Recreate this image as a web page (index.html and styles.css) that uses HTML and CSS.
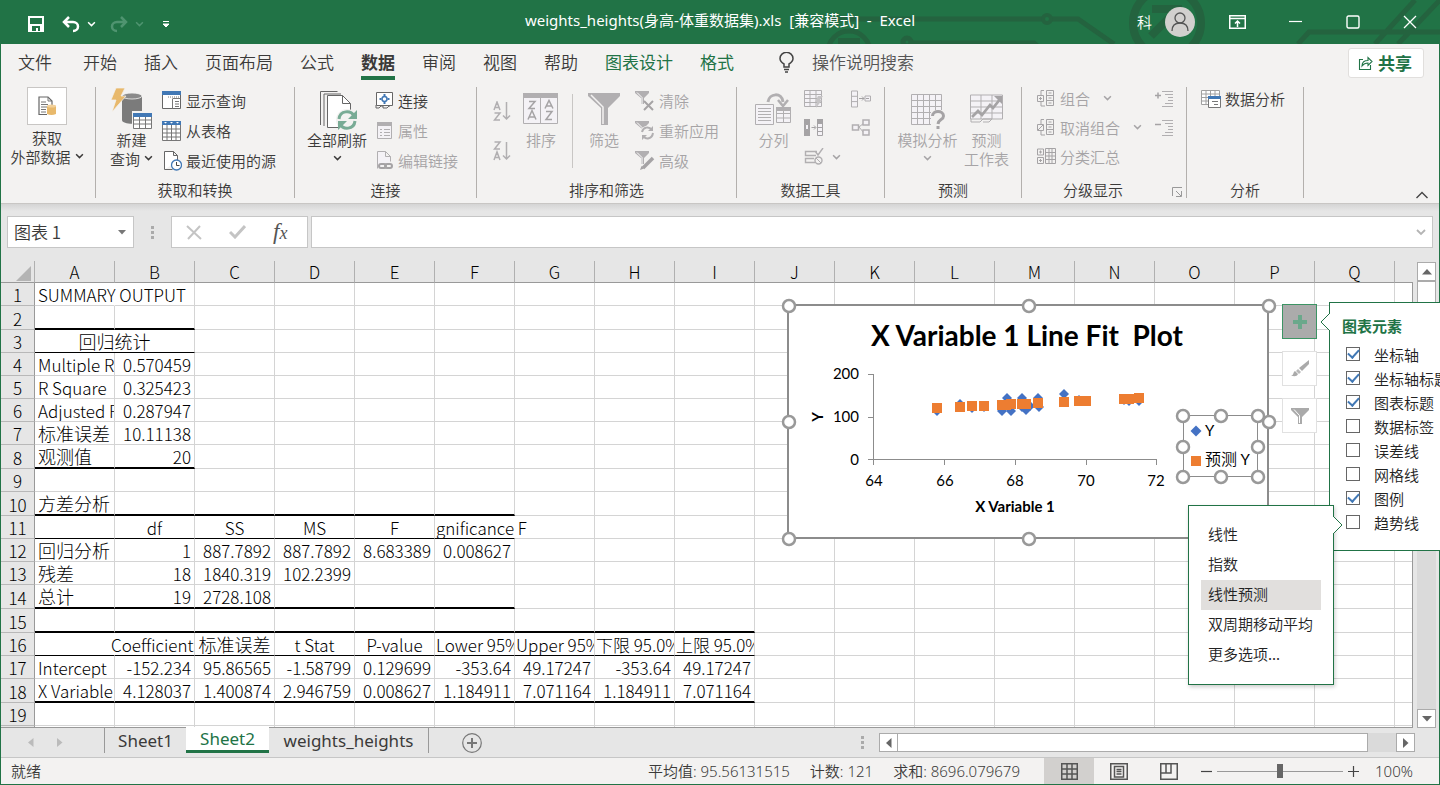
FILE: index.html
```html
<!DOCTYPE html>
<html lang="zh-CN">
<head>
<meta charset="utf-8">
<title>weights_heights(身高-体重数据集).xls - Excel</title>
<link rel="stylesheet" href="styles.css">
</head>
<body>
<svg class="defs" width="0" height="0" aria-hidden="true">
  <symbol id="chev" viewBox="0 0 8 6"><path d="M1 1l3 3 3-3" fill="none" stroke="currentColor" stroke-width="1.300"/></symbol>
  <symbol id="funnel" viewBox="0 0 32 32"><path d="M0 0h32v3L20 15v17h-7V15L0 3z" fill="#b1afb1"/><path d="M3 2l12 12v17" fill="none" stroke="#f3f2f1" stroke-width="1.500"/></symbol>
</svg>

<header class="titlebar">
  <svg class="circuit" viewBox="820 0 620 44" width="620" height="44" aria-hidden="true">
    <g fill="none" stroke="#24633f" stroke-width="5">
      <circle cx="849" cy="52" r="21"/><path d="M838 41h22" stroke-width="6"/>
      <circle cx="907" cy="42" r="4"/><path d="M912 43h122l7 6"/>
      <path d="M828 19h214M1052 19h26l36 25"/><circle cx="1047" cy="19" r="4" stroke-width="4"/>
      <circle cx="1167" cy="23" r="34" stroke-width="8"/><path d="M1151 36l26-26M1152 9h26v24" stroke-width="8"/>
      <path d="M1298 44l11-12h131M1375 44l40-44M1398 44l42-44"/>
    </g>
  </svg>
  <div class="quick">
    <button class="tbtn save" aria-label="保存"><svg width="16" height="16" viewBox="0 0 16 16"><path d="M1 1h14v14H1z" fill="none" stroke="#fff" stroke-width="2"/><path d="M2 8h12v7H2z" fill="#fff"/><path d="M4 10h8v5h-2v-3H8v3H4z" fill="#217346"/></svg></button>
    <button class="tbtn undo" aria-label="撤消"><svg width="18" height="17" viewBox="0 0 18 17"><path d="M2 6h9c3 0 5 2 5 4.500S14 15 11 15M7 1L2 6l5 5" fill="none" stroke="#fff" stroke-width="2.500"/></svg></button>
    <button class="tbtn uchev" aria-label="撤消列表"><svg width="9" height="7"><use href="#chev"/></svg></button>
    <button class="tbtn redo" aria-label="恢复"><svg width="18" height="17" viewBox="0 0 18 17"><path d="M16 6H7C4 6 2 8 2 10.500S4 15 7 15M11 1l5 5-5 5" fill="none" stroke="#4f9470" stroke-width="2.500"/></svg></button>
    <button class="tbtn rchev" aria-label="恢复列表"><svg width="9" height="7"><use href="#chev"/></svg></button>
    <button class="tbtn" aria-label="自定义快速访问工具栏"><svg width="6" height="6" viewBox="0 0 6 6"><path d="M0 .5h6M0 3h6L3 6z" fill="#fff" stroke="#fff" stroke-width="1"/></svg></button>
  </div>
  <h1 class="doc">weights_heights(身高-体重数据集).xls&nbsp; [兼容模式]&nbsp; -&nbsp; Excel</h1>
  <div class="winctl">
    <span class="user">科</span>
    <svg class="avatar" width="30" height="30" viewBox="0 0 30 30"><circle cx="15" cy="15" r="15" fill="#d2d0ce"/><circle cx="15" cy="11" r="5" fill="none" stroke="#555" stroke-width="1.300"/><path d="M7 24c0-5 3-8 8-8s8 3 8 8" fill="none" stroke="#555" stroke-width="1.300"/></svg>
    <button class="tbtn" aria-label="功能区显示选项"><svg width="17" height="14" viewBox="0 0 17 14"><path d="M.75.75h15.500v12.500H.75zM1 3.500h15M8.500 12V6M6 8.500L8.500 6 11 8.500" fill="none" stroke="#fff" stroke-width="1.500"/></svg></button>
    <button class="tbtn" aria-label="最小化"><svg width="14" height="14" viewBox="0 0 14 14"><path d="M0 6.500h13" stroke="#fff" stroke-width="1.200"/></svg></button>
    <button class="tbtn" aria-label="最大化"><svg width="14" height="14" viewBox="0 0 14 14"><rect x="1" y="1" width="12" height="12" rx="1.500" fill="none" stroke="#fff" stroke-width="1.400"/></svg></button>
    <button class="tbtn" aria-label="关闭"><svg width="14" height="14" viewBox="0 0 14 14"><path d="M1 1l12 12M13 1L1 13" stroke="#fff" stroke-width="1.300"/></svg></button>
  </div>
</header>

<nav class="tabs">
  <button class="tab file">文件</button>
  <button class="tab">开始</button>
  <button class="tab">插入</button>
  <button class="tab">页面布局</button>
  <button class="tab">公式</button>
  <button class="tab active">数据</button>
  <button class="tab">审阅</button>
  <button class="tab">视图</button>
  <button class="tab">帮助</button>
  <button class="tab ctx">图表设计</button>
  <button class="tab ctx">格式</button>
  <button class="tab tell"><svg width="15" height="21" viewBox="0 0 15 21"><path d="M5 15v-3C2.500 10.500 1 9 1 6.500a6.500 6.200 0 0 1 13 0C14 9 12.500 10.500 10 12v3zM5 17.500h5M6 20h3" fill="none" stroke="#444" stroke-width="1.500"/></svg>操作说明搜索</button>
  <button class="share"><svg width="15" height="15" viewBox="0 0 15 15"><path d="M5 3.500H1.500v10h11V9M4 10c0-4 2.500-5.500 6-5.500V1.500l4 4-4 4V7C7 7 5.500 8 4 10z" fill="none" stroke="#217346" stroke-width="1.100"/></svg>共享</button>
</nav>

<section class="ribbon">
  <div class="group g1">
    <div class="gbody">
      <button class="big">
        <span class="box"><svg width="18" height="20" viewBox="0 0 18 20"><path d="M9 18.500H1V1h9l4 4v4" fill="#fff" stroke="#666" stroke-width="1.200"/><path d="M10 1v4h4M3 6h5M3 8.500h7M3 11h6M3 13.500h5M3 16h5" fill="none" stroke="#777"/><path d="M9 10h9v8q-4.500 2-9 0z" fill="#e8b96c"/><ellipse cx="13.500" cy="10" rx="4.500" ry="1.500" fill="#f3d19a"/></svg></span>
        <span class="cap">获取</span><span class="cap">外部数据 <svg class="cv" width="9" height="7"><use href="#chev"/></svg></span>
      </button>
    </div>
  </div>
  <div class="group g2">
    <div class="gbody">
      <button class="big">
        <svg width="42" height="42" viewBox="0 0 42 42"><path d="M11 8v24c0 5 20 5 20 0V8z" fill="#7b7b7b"/><ellipse cx="21" cy="8" rx="10" ry="3" fill="#8a8a8a" stroke="#f3f2f1" stroke-width=".8"/><path d="M5 0h9l-4 8h5L1 24l4-12H0z" fill="#e8b96c" stroke="#f3f2f1" stroke-width=".7"/><path d="M21 23h21v19H21z" fill="#f3f2f1"/><path d="M22.500 25.500h18v15h-18zM22.500 32h18M22.500 36h18M28.500 28v13M34.500 28v13" fill="#fff" stroke="#777"/><path d="M22 25h19v4H22z" fill="#4178b5"/></svg>
        <span class="cap">新建</span><span class="cap">查询 <svg class="cv" width="9" height="7"><use href="#chev"/></svg></span>
      </button>
      <div class="col">
        <button class="small"><svg width="20" height="19" viewBox="0 0 20 19"><path d="M.5.5h18v17H.5z" fill="#fff" stroke="#666"/><path d="M0 0h19v4H0z" fill="#4178b5"/><path d="M10.500 8v9.500M10.500 7.500h8M13 10.500h4M13 13h4M13 15.500h4" stroke="#777" fill="none"/><path d="M6 6h11" stroke="#777" stroke-dasharray="1 1"/></svg>显示查询</button>
        <button class="small"><svg width="20" height="20" viewBox="0 0 20 20"><path d="M.5.5h18v19H.5zM.5 8h18M.5 12h18M.5 16h18M5 4v16M9.500 4v16M14 4v16" fill="#fff" stroke="#777"/><path d="M0 0h19v4H0z" fill="#4178b5"/><path d="M2 1h3L3.500 2.500zM8 1h3L9.500 2.500zM14 1h3l-1.500 1.500z" fill="#fff"/></svg>从表格</button>
        <button class="small"><svg width="20" height="20" viewBox="0 0 20 20"><path d="M2.500 18.500V.5h9l4 4V10M11.500.5v4h4M2.500 18.500h8" fill="#fff" stroke="#666"/><circle cx="14.500" cy="14" r="5" fill="#fff" stroke="#4178b5" stroke-width="1.300"/><path d="M14.500 11v3.500h3" fill="none" stroke="#444"/></svg>最近使用的源</button>
      </div>
    </div>
    <h2 class="glabel">获取和转换</h2>
  </div>
  <div class="group g3">
    <div class="gbody">
      <button class="big">
        <svg width="38" height="40" viewBox="0 0 38 40"><path d="M.5 35V1.500h17M4 36V4h17" fill="none" stroke="#666"/><path d="M7.500 37.500v-32h15l8 8v24z" fill="#fff" stroke="#666"/><path d="M22.500 5.500v8h8" fill="none" stroke="#666"/><circle cx="27" cy="30" r="11" fill="#f3f2f1"/><path d="M19 29c1-9 12-9 15-3M35 31c-1 9-12 9-15 3" fill="none" stroke="#78ab95" stroke-width="3"/><path d="M37 20v9h-9zM18 40v-9h9z" fill="#78ab95"/></svg>
        <span class="cap">全部刷新</span><span class="cap"><svg class="cv" width="9" height="7"><use href="#chev"/></svg></span>
      </button>
      <div class="col">
        <button class="small"><svg width="19" height="18" viewBox="0 0 19 18"><path d="M1.500 13.500V.5h16v13z" fill="#fff" stroke="#666"/><path d="M1 13v3h3l2-2h2v2h4l2-2h1" fill="none" stroke="#666"/><circle cx="9.500" cy="7" r="2.500" fill="none" stroke="#4178b5" stroke-width="1.500"/><path d="M9.500 2v2M9.500 10v2M4.500 7h2M12.500 7h2" stroke="#4178b5" stroke-width="2"/></svg>连接</button>
        <button class="small off"><svg width="19" height="18" viewBox="0 0 19 18"><path d="M2.500.5h14v16h-14z" fill="#f4f2f6" stroke="#b1afb1"/><path d="M2 0h15v4H2z" fill="#b1afb1"/><path d="M9 7.500h6M9 10.500h6M9 13.500h6M5 7.500h2M5 10.500h2M5 13.500h2" stroke="#b1afb1"/></svg>属性</button>
        <button class="small off"><svg width="19" height="19" viewBox="0 0 19 19"><path d="M2.500 17.500V.5h8l5 5v5M10.500.5v5h5" fill="#f4f2f6" stroke="#b1afb1"/><rect x="4" y="13" width="7" height="4" rx="2" fill="none" stroke="#a5a3a5" stroke-width="2"/><rect x="10" y="13" width="7" height="4" rx="2" fill="none" stroke="#a5a3a5" stroke-width="2"/></svg>编辑链接</button>
      </div>
    </div>
    <h2 class="glabel">连接</h2>
  </div>
  <div class="group g4">
    <div class="gbody">
      <div class="azcol">
        <button class="ico" aria-label="升序"><svg width="18" height="20" viewBox="0 0 18 20"><path d="M1 9l3-8 3 8M2 6.500h4M1.500 12h5.500l-5.500 7H7M13.500 1v17M10 14.500l3.500 3.500 3.500-3.500" fill="none" stroke="#b1afb1" stroke-width="1.500"/></svg></button>
        <button class="ico" aria-label="降序"><svg width="18" height="20" viewBox="0 0 18 20"><path d="M1.500 1H7L1.500 8H7M1 19l3-8 3 8M2 16.500h4M13.500 1v17M10 14.500l3.500 3.500 3.500-3.500" fill="none" stroke="#b1afb1" stroke-width="1.500"/></svg></button>
      </div>
      <button class="big off sort"><svg width="36" height="32" viewBox="0 0 36 32"><path d="M.5.5h34v30H.5zM17.500 4v27" fill="#f4f2f6" stroke="#b1afb1"/><path d="M0 0h35v5H0z" fill="#b1afb1"/><path d="M6 8.500h6l-6 7h6M5 26.500l4-9 4 9M6.500 24h5M22 15.500l4-8 4 8M23.500 13h5M23 18.500h6l-6 8h6" fill="none" stroke="#a5a3a5" stroke-width="1.500"/></svg><span class="cap">排序</span></button>
      <i class="vline"></i>
      <button class="big off filt"><svg width="32" height="32"><use href="#funnel"/></svg><span class="cap">筛选</span></button>
      <div class="col">
        <button class="small off"><svg width="20" height="20" viewBox="0 0 20 20"><path d="M0 0h14v2L9 7v6H6V7L0 2z" fill="#b1afb1"/><path d="M2 1.500l5 5V13" fill="none" stroke="#fff"/><path d="M9 10l9 9M18 10l-9 9" stroke="#a5a3a5" stroke-width="2"/></svg>清除</button>
        <button class="small off"><svg width="20" height="20" viewBox="0 0 20 20"><path d="M0 0h14v2L9 7v6H6V7L0 2z" fill="#b1afb1"/><path d="M2 1.500l5 5V13" fill="none" stroke="#fff"/><circle cx="12" cy="12" r="7" fill="#f3f2f1"/><path d="M7 11c1-5 7-6 10-2M18 12c-1 6-7 7-10 3" fill="none" stroke="#b1afb1" stroke-width="2"/><path d="M18 5v5h-5zM7 19v-5h5z" fill="#b1afb1"/></svg>重新应用</button>
        <button class="small off"><svg width="20" height="20" viewBox="0 0 20 20"><path d="M0 0h14v2L9 7v6H6V7L0 2z" fill="#b1afb1"/><path d="M2 1.500l5 5V13" fill="none" stroke="#fff"/><path d="M8 17L18 7" stroke="#a5a3a5" stroke-width="3.500"/><path d="M5 19l1.500-4L9 17.500z" fill="#a5a3a5"/></svg>高级</button>
      </div>
    </div>
    <h2 class="glabel">排序和筛选</h2>
  </div>
  <div class="group g5">
    <div class="gbody">
      <button class="big off"><svg width="37" height="32" viewBox="0 0 37 32"><path d="M.5 11.500h18v20H.5z" fill="#f4f2f6" stroke="#b1afb1"/><path d="M3 15.500h13M3 18.500h13M3 21.500h13M3 24.500h13M3 27.500h13" stroke="#b1afb1"/><path d="M21.500 15.500h14v14h-14zM21.500 20.500h14M21.500 25h14M28.500 18v12" fill="#f4f2f6" stroke="#b1afb1"/><path d="M21 14h15v4H21z" fill="#b1afb1"/><path d="M13 9c1-9 14-10 15 0" fill="none" stroke="#b1afb1" stroke-width="3"/><path d="M23 7l5 6 5-6" fill="none" stroke="#b1afb1" stroke-width="2.500"/></svg><span class="cap">分列</span></button>
      <div class="tools">
        <button class="ico" aria-label="快速填充"><svg width="20" height="18" viewBox="0 0 20 18"><path d="M.5.5h17v16H.5zM.5 4.500h17M.5 8.500h17M.5 12.500h17M6 .5v16M12 .5v16" fill="#f4f2f6" stroke="#b1afb1"/><path d="M14 6h5l-3 4h2l-6 8 1-6h-2z" fill="#c6c4c6"/></svg></button>
        <button class="ico" aria-label="合并计算"><svg width="20" height="18" viewBox="0 0 20 18"><path d="M.5 1h6v16h-6zM.5 6.300h6M.5 11.600h6M14 6h5.500v5H14z" fill="#f4f2f6" stroke="#b1afb1"/><path d="M8 8.500h5M11 6.500l2 2-2 2M15 8.500h3" fill="none" stroke="#a5a3a5"/></svg></button>
        <button class="ico" aria-label="删除重复值"><svg width="20" height="18" viewBox="0 0 20 18"><path d="M0 0h6v17H0z" fill="#a5a3a5"/><path d="M1.500 5.500h3v5h-3zM13.500.5h5v16h-5zM13.500 8.500h5M13.500 12.500h5" fill="#f4f2f6" stroke="#a5a3a5"/><path d="M13 0h6v5h-6z" fill="#a5a3a5"/><path d="M7.500 8.500h4M10 6.500l2 2-2 2" fill="none" stroke="#a5a3a5"/></svg></button>
        <button class="ico" aria-label="关系"><svg width="20" height="18" viewBox="0 0 20 18"><path d="M8 8l5-4M8 8l5 6" stroke="#b1afb1"/><path d="M1.500 6h6v5h-6zM12 1h6v5h-6zM12 11h6v5h-6z" fill="#f4f2f6" stroke="#b1afb1" stroke-width="1.500"/></svg></button>
        <button class="ico" aria-label="数据验证"><svg width="20" height="18" viewBox="0 0 20 18"><path d="M13 3.500H1.500v4H12M10 10.500H1.500v4H11M11 3l3 4 5-7" fill="none" stroke="#b1afb1" stroke-width="1.400"/><circle cx="14.500" cy="12.500" r="3.500" fill="none" stroke="#b1afb1" stroke-width="1.400"/><path d="M12 10l5 5" stroke="#b1afb1"/></svg><svg class="cv" width="9" height="7"><use href="#chev"/></svg></button>
      </div>
    </div>
    <h2 class="glabel">数据工具</h2>
  </div>
  <div class="group g6">
    <div class="gbody">
      <button class="big off"><svg width="34" height="36" viewBox="0 0 34 36"><path d="M.5.5h30v30H.5zM.5 6.500h30M.5 12.500h30M.5 18.500h30M.5 24.500h30M6.500.5v30M12.500.5v30M18.500.5v30M24.500.5v30" fill="#f4f2f6" stroke="#b1afb1"/><path d="M20 16h14v20H20z" fill="#f3f2f1"/><path d="M21.500 22c0-6 11-6 11 0 0 4-5 3-5.500 8" fill="none" stroke="#a5a3a5" stroke-width="3"/><path d="M25.500 32h3v3h-3z" fill="#a5a3a5"/></svg><span class="cap">模拟分析</span><span class="cap"><svg class="cv" width="9" height="7"><use href="#chev"/></svg></span></button>
      <button class="big off"><svg width="34" height="36" viewBox="0 0 34 36"><path d="M.5 1h32v24H.5zM.5 7h32M.5 13h32M.5 19h32M11 1v24M22 1v24" fill="#f4f2f6" stroke="#b1afb1"/><path d="M1 25v3h9l3-3h9l-3 3h-6" fill="none" stroke="#b1afb1"/><path d="M2 23l6-6 4 4 8-10 3 3L31 4" fill="none" stroke="#a5a3a5" stroke-width="2.800"/><path d="M24 2h8v8z" fill="#a5a3a5"/></svg><span class="cap">预测</span><span class="cap">工作表</span></button>
    </div>
    <h2 class="glabel">预测</h2>
  </div>
  <div class="group g7">
    <div class="gbody">
      <div class="col tight">
        <button class="small off"><svg width="19" height="17" viewBox="0 0 19 17"><path d="M4 5V.5h3M4 12v4h4M.5 5.500h6v6h-6zM9.500.5h7v15h-7zM9.500 5.500h7M9.500 10.500h7M2 8.500h3M3.500 7v3M11.500 3h3M11.500 8h3M11.500 13h3" fill="none" stroke="#a5a3a5"/></svg>组合<svg class="cv c1" width="9" height="7"><use href="#chev"/></svg></button>
        <button class="small off"><svg width="19" height="17" viewBox="0 0 19 17"><path d="M4 5V.5h3M4 12v4h4M.5 5.500h6v6h-6zM9.500.5h7v15h-7zM9.500 5.500h7M9.500 10.500h7M1 11l5-5M11.500 3h3M11.500 8h3M11.500 13h3" fill="none" stroke="#a5a3a5"/></svg>取消组合<svg class="cv c1" width="9" height="7"><use href="#chev"/></svg></button>
        <button class="small off"><svg width="19" height="17" viewBox="0 0 19 17"><path d="M.5 1h6v6h-6zM.5 9.500h6v6h-6zM8.500.5h10v15h-10zM8.500 4.500h10M8.500 8h10M8.500 11.500h10M12 .5v15M15 .5v15M2 4h3M3.500 2.500v3M2 12.500h3M3.500 11v3" fill="none" stroke="#a5a3a5"/></svg>分类汇总</button>
      </div>
      <div class="col tight">
        <button class="ico" aria-label="显示明细数据"><svg width="18" height="16" viewBox="0 0 18 16"><path d="M0 4.500h6M3 1.500v6" stroke="#a5a3a5" stroke-width="1.500"/><path d="M7 .5h11M10 3.500h8M13 6.500h5M13 9.500h5M10 12.500h8M7 15.500h11" stroke="#b1afb1"/></svg></button>
        <button class="ico" aria-label="隐藏明细数据"><svg width="18" height="16" viewBox="0 0 18 16"><path d="M0 4.500h6" stroke="#a5a3a5" stroke-width="1.500"/><path d="M7 .5h11M10 3.500h8M13 6.500h5M13 9.500h5M10 12.500h8M7 15.500h11" stroke="#b1afb1"/></svg></button>
      </div>
    </div>
    <h2 class="glabel">分级显示</h2>
    <button class="launch" aria-label="分级显示设置"><svg width="11" height="11" viewBox="0 0 11 11"><path d="M.5 9V.5H10M4 4l5 5M9.500 4v5.500H4" fill="none" stroke="#999"/></svg></button>
  </div>
  <div class="group g8">
    <div class="gbody">
      <div class="col tight"><button class="small"><svg width="20" height="18" viewBox="0 0 20 18"><path d="M.5.500h18v14H.5zM.5 4h18M.5 7.500h18M.5 11h18M5 .5v14M9.500 .5v14M14 .5v14" fill="#fff" stroke="#a0a0a0"/><path d="M7.500 6.500h12v11h-12z" fill="#fff" stroke="#777"/><path d="M7 6h13v3H7z" fill="#4178b5"/><path d="M11 11.500h6M13 14.500h4" stroke="#777"/></svg>数据分析</button></div>
    </div>
    <h2 class="glabel">分析</h2>
  </div>
  <button class="collapse" aria-label="折叠功能区"><svg width="14" height="8" viewBox="0 0 14 8"><path d="M1.500 7L7 1.500 12.500 7" fill="none" stroke="#444" stroke-width="1.400"/></svg></button>
</section>

<section class="fbar">
  <div class="namebox"><input type="text" value="图表 1" aria-label="名称框"><svg width="8" height="5" viewBox="0 0 8 5"><path d="M0 0h8L4 4.500z" fill="#777"/></svg></div>
  <i class="dots"></i>
  <div class="fbtns">
    <button aria-label="取消"><svg width="16" height="15" viewBox="0 0 16 15"><path d="M1 1l14 13M14 1L2 14" stroke="#c4c4c4" stroke-width="2"/></svg></button>
    <button aria-label="输入"><svg width="17" height="14" viewBox="0 0 17 14"><path d="M1 7l5 5L16 1" fill="none" stroke="#c4c4c4" stroke-width="3"/></svg></button>
    <button class="fx" aria-label="插入函数">f<small>x</small></button>
  </div>
  <div class="fin"><input type="text" aria-label="编辑栏"><svg width="10" height="7" viewBox="0 0 10 7"><path d="M1 1l4 4 4-4" fill="none" stroke="#b4b4b4" stroke-width="1.800"/></svg></div>
</section>

<main class="work">
  <div class="sheet">
    <table class="grid" id="grid"></table>
  </div>
  <div class="vscroll">
    <button aria-label="向上滚动"><svg width="10" height="6" viewBox="0 0 10 6"><path d="M0 5.500h10L5 0z" fill="#666"/></svg></button>
    <i class="vthumb"></i><i class="vtrack"></i>
    <button aria-label="向下滚动"><svg width="10" height="6" viewBox="0 0 10 6"><path d="M0 0h10L5 5.500z" fill="#666"/></svg></button>
  </div>

  <svg class="chart" viewBox="780 296 498 252" width="498" height="252" role="img" aria-label="X Variable 1 Line Fit Plot">
    <rect x="788" y="305" width="480" height="233" fill="#fff" stroke="#8c8c8c" stroke-width="2"/>
    <text class="ct" x="1027" y="346" text-anchor="middle">X Variable 1 Line Fit&#160; Plot</text>
    <g stroke="#8c8c8c" fill="none"><path d="M873.500 374v91M868 374.500h5M868 417.500h5M868 459.500h289M944.500 460v5M1015.500 460v5M1086.500 460v5M1156.500 460v5"/></g>
    <g class="ax" text-anchor="end"><text x="859" y="379">200</text><text x="859" y="422">100</text><text x="859" y="465">0</text></g>
    <g class="ax" text-anchor="middle"><text x="874" y="486">64</text><text x="945" y="486">66</text><text x="1015" y="486">68</text><text x="1086" y="486">70</text><text x="1156" y="486">72</text></g>
    <text class="at" x="1015" y="512" text-anchor="middle">X Variable 1</text>
    <text class="at" transform="translate(823 417) rotate(-90)" text-anchor="middle">Y</text>
    <g id="points"></g>
    <rect x="1183.500" y="415.500" width="74" height="61" fill="#fff" stroke="#8c8c8c"/>
    <path d="M1196 425.500l5.500 5.500-5.500 5.500-5.500-5.500z" fill="#4472c4"/><path d="M1191 456h10v10h-10z" fill="#ed7d31"/>
    <text class="ax" x="1205" y="436">Y</text><text class="lg" x="1205" y="465">预测 <tspan class="ax">Y</tspan></text>
    <g fill="#fff" stroke="#999" stroke-width="2.500">
      <circle cx="789" cy="306" r="6"/><circle cx="1029" cy="306" r="6"/><circle cx="1269" cy="306" r="6"/><circle cx="789" cy="422" r="6"/><circle cx="1269" cy="422" r="6"/><circle cx="789" cy="539" r="6"/><circle cx="1029" cy="539" r="6"/>
      <circle cx="1183" cy="416" r="6"/><circle cx="1221" cy="416" r="6"/><circle cx="1258" cy="416" r="6"/><circle cx="1183" cy="447" r="6"/><circle cx="1258" cy="447" r="6"/><circle cx="1183" cy="477" r="6"/><circle cx="1221" cy="477" r="6"/><circle cx="1258" cy="477" r="6"/>
    </g>
  </svg>

  <div class="cbtns">
    <button class="on" aria-label="图表元素"><svg width="14" height="14" viewBox="0 0 14 14"><path d="M7 0v14M0 7h14" stroke="#6aa88b" stroke-width="4"/></svg></button>
    <button aria-label="图表样式"><svg width="18" height="17" viewBox="0 0 18 17"><path d="M18 0v4l-7 7-3-3z" fill="#aaa"/><path d="M7 9l3 3-2 2-3-3z" fill="#b8b8b8"/><path d="M4 11l3 3c-1 3-4 2-7 2 3-1 2-4 4-5z" fill="#aaa"/></svg></button>
    <button aria-label="图表筛选器"><svg width="18" height="16" viewBox="0 0 18 16"><path d="M0 0h18v2l-7 7v7H7V9L0 2z" fill="#aaa"/><path d="M3 1.500l5.500 6V15" fill="none" stroke="#fff"/></svg></button>
  </div>

  <div class="panel">
    <svg class="notchL" width="10" height="20" viewBox="0 0 10 20"><path d="M10 0v1L1 10l9 9v1" fill="#fff" stroke="#217346"/></svg>
    <h3>图表元素</h3>
    <label><input type="checkbox" checked>坐标轴</label>
    <label><input type="checkbox" checked>坐标轴标题</label>
    <label><input type="checkbox" checked>图表标题</label>
    <label><input type="checkbox">数据标签</label>
    <label><input type="checkbox">误差线</label>
    <label><input type="checkbox">网格线</label>
    <label><input type="checkbox" checked>图例</label>
    <label><input type="checkbox">趋势线</label>
  </div>
  <div class="submenu">
    <svg class="notchR" width="10" height="20" viewBox="0 0 10 20"><path d="M0 0v1l9 9-9 9v1" fill="#fff" stroke="#217346"/></svg>
    <button>线性</button>
    <button>指数</button>
    <button class="hot">线性预测</button>
    <button>双周期移动平均</button>
    <button>更多选项...</button>
  </div>
</main>

<footer class="sheets">
  <button class="nav" aria-label="上一个"><svg width="6" height="9" viewBox="0 0 6 9"><path d="M5.500 0v9L0 4.500z" fill="#bbb"/></svg></button>
  <button class="nav n2" aria-label="下一个"><svg width="6" height="9" viewBox="0 0 6 9"><path d="M0 0v9l5.500-4.500z" fill="#bbb"/></svg></button>
  <button class="st first">Sheet1</button>
  <button class="st cur">Sheet2</button>
  <button class="st last">weights_heights</button>
  <button class="add" aria-label="新工作表"><svg width="20" height="20" viewBox="0 0 20 20"><circle cx="10" cy="10" r="9.300" fill="none" stroke="#777" stroke-width="1.200"/><path d="M10 5v10M5 10h10" stroke="#777" stroke-width="2"/></svg></button>
  <i class="dots"></i>
  <div class="hscroll">
    <button aria-label="向左滚动"><svg width="6" height="10" viewBox="0 0 6 10"><path d="M5.500 0v10L0 5z" fill="#666"/></svg></button>
    <i class="hthumb"></i><i class="htrack"></i>
    <button aria-label="向右滚动"><svg width="6" height="10" viewBox="0 0 6 10"><path d="M0 0v10l5.500-5z" fill="#666"/></svg></button>
  </div>
</footer>
<footer class="status">
  <span class="ready">就绪</span>
  <span class="stat">平均值: 95.56131515</span>
  <span class="stat">计数: 121</span>
  <span class="stat">求和: 8696.079679</span>
  <div class="views">
    <button class="on" aria-label="普通"><svg width="17" height="17" viewBox="0 0 17 17"><path d="M.75.75h15.500v15.500H.75zM6 1v15M11 1v15M1 6h15M1 11h15" fill="none" stroke="#555" stroke-width="1.500"/></svg></button>
    <button aria-label="页面布局"><svg width="18" height="17" viewBox="0 0 18 17"><path d="M.75.75h16.500v15.500H.75zM4.500 3.500h9v10.500h-9zM6.500 6.500h5M6.500 8.500h5M6.500 11h5" fill="none" stroke="#555" stroke-width="1.500"/></svg></button>
    <button aria-label="分页预览"><svg width="18" height="17" viewBox="0 0 18 17"><path d="M.75.75h16.500v15.500H.75zM1 10h10V1M6 1v9" fill="none" stroke="#555" stroke-width="1.500"/></svg></button>
  </div>
  <button class="zb" aria-label="缩小"><svg width="11" height="11" viewBox="0 0 11 11"><path d="M0 5.500h11" stroke="#444" stroke-width="1.200"/></svg></button>
  <input class="zoom" type="range" min="0" max="100" value="50" aria-label="缩放">
  <button class="zb" aria-label="放大"><svg width="11" height="11" viewBox="0 0 11 11"><path d="M0 5.500h11M5.500 0v11" stroke="#444" stroke-width="1.200"/></svg></button>
  <span class="pct">100%</span>
</footer>
<script src="sheet.js"></script>
</body>
</html>
```

FILE: styles.css
```css
* { box-sizing: border-box; }
body {
  margin: 0; height: 100vh; overflow: hidden; display: flex; flex-direction: column;
  background: #e6e6e6; color: #3b3a39;
  font: 350 15px/19px "Noto Sans CJK SC", sans-serif;
}
body::after { content: ""; position: absolute; inset: 44px 0 0 0; border: 1px solid #217346; border-top: 0; pointer-events: none; }
button { font: inherit; color: inherit; background: none; border: 0; padding: 0; margin: 0; }
svg { display: block; flex: none; }
h1, h2, h3 { margin: 0; font: inherit; }
input { font: inherit; color: inherit; }
.defs { position: absolute; }

.titlebar { position: relative; height: 44px; flex: none; display: grid; grid-template-columns: 1fr auto 1fr; align-items: center; background: #217346; color: #fff; }
.circuit { position: absolute; right: 0; top: 0; }
.quick, .doc, .winctl { position: relative; display: flex; align-items: center; }
.quick { padding-left: 28px; padding-top: 4px; }
.quick .undo { margin-left: 18px; }
.quick .uchev { margin-left: 7px; }
.quick .redo { margin-left: 14px; }
.quick .rchev { margin: 0 19px 0 7px; color: #4f9470; }
.doc { white-space: nowrap; height: 40px; align-self: start; font-family: "Noto Sans", "Noto Sans CJK SC", sans-serif; font-weight: 400; }
.winctl { justify-content: flex-end; padding-right: 23px; }
.user { margin-right: 13px; line-height: 15px; padding-bottom: 2px; }
.winctl .tbtn { margin-left: 43px; }
.winctl .avatar + .tbtn { margin-left: 34px; }

.tabs { height: 40px; flex: none; display: flex; align-items: flex-start; gap: 27px; padding: 0 16px 0 18px; background: #f3f2f1; font-size: 17px; line-height: 36px; }
.tab { height: 36px; white-space: nowrap; }
.file { margin-right: 4px; }
.tab.active { font-weight: bold; border-bottom: 4px solid #217346; line-height: 36px; }
.tab.ctx { color: #217346; font-weight: 400; }
.tell { display: flex; align-items: center; gap: 18px; margin-left: 18px; color: #555; }
.share { display: flex; align-items: center; gap: 5px; margin: 4px 0 0 auto; height: 30px; padding: 0 11px 0 9px; border: 1px solid #e1dfdd; border-radius: 3px; background: #fff; color: #217346; font-weight: bold; line-height: 26px; }

.ribbon { position: relative; height: 120px; flex: none; display: flex; padding: 3px 0 5px; background: #f3f2f1; border-bottom: 1px solid #c8c6c4; }
.group { position: relative; display: flex; flex-direction: column; border-right: 1px solid #b3b0ad; }
.gbody { display: flex; flex: 1; align-items: flex-start; }
.glabel { text-align: center; height: 17px; line-height: 18px; }
.off { color: #a6a4a6; }
.big { display: flex; flex-direction: column; align-items: center; flex: none; white-space: nowrap; }
.cap { display: flex; align-items: center; gap: 4px; height: 19px; }
.box { display: flex; align-items: center; justify-content: center; width: 40px; height: 38px; border: 1px solid #c8c6c4; background: #fff; }
.col { display: flex; flex-direction: column; gap: 11px; padding-top: 4px; }
.col.tight { gap: 10px; padding-top: 2px; }
.small { display: flex; align-items: center; gap: 4px; height: 19px; white-space: nowrap; }
.g1 { width: 96px; }
.g1 .big { width: 94px; }
.g1 .box { margin-bottom: 3px; }
.g2 { width: 199px; }
.g2 .big { width: 71px; padding-top: 1px; margin-right: -5px; }
.g3 { width: 182px; }
.g3 .big { width: 80px; padding-top: 3px; margin-left: 2px; margin-right: -2px; }
.g3 .big > svg { margin-left: 3px; }
.g4 { width: 260px; }
.azcol { display: flex; flex-direction: column; gap: 20px; padding: 14px 12px 0 16px; }
.g4 .big { padding-top: 6px; }
.g4 .big > svg, .g5 .big > svg { margin-bottom: 5px; }
.vline { width: 1px; height: 74px; margin: 7px 15px 0 13px; background: #c8c6c4; }
.g4 .col { padding-left: 15px; }
.g5 { width: 148px; }
.g5 .big { padding: 6px 12px 0 18px; }
.tools { display: grid; grid-template-columns: 47px 20px; gap: 11px 0; padding-top: 3px; }
.ico { display: flex; align-items: center; color: #a5a3a5; gap: 8px; }
.g6 { width: 137px; }
.g6 .big { width: 59px; padding-top: 7px; }
.g6 .big:first-child { margin-left: 13px; }
.g7 { width: 165px; }
.g7 .col:first-child { padding-left: 15px; width: 133px; }
.g7 .col:last-child { gap: 13px; padding-top: 4px; }
.c1 { margin-left: 9px; }
.g7 .glabel { padding-right: 22px; }
.launch { position: absolute; right: 3px; bottom: 0; }
.g8 { width: 117px; }
.g8 .col { padding-left: 14px; }
.collapse { position: absolute; right: 11px; bottom: 4px; }

.fbar { height: 57px; flex: none; display: flex; align-items: flex-start; padding: 12px 7px 0 7px; background: linear-gradient(#d4d4d4, #e6e6e6 7px); }
.namebox, .fbtns, .fin { display: flex; align-items: center; height: 32px; border: 1px solid #c6c6c6; background: #fff; }
.namebox { width: 127px; padding-right: 7px; }
.namebox input { flex: 1; min-width: 0; border: 0; padding: 0 6px 2px; background: none; font-size: 17px; }
.dots { width: 3px; height: 13px; margin: 10px 17px 0 17px; background: repeating-linear-gradient(#aaa 0 3px, transparent 3px 5px); }
.fbtns { width: 137px; justify-content: space-around; padding: 0 6px 0 0; margin-right: 3px; }
.fx { font: italic 23px/24px "Liberation Serif", serif; color: #555; }
.fx small { font-size: 18px; }
.fin { flex: 1; padding-right: 6px; }
.fin input { flex: 1; border: 0; min-width: 0; background: none; }

.work { position: relative; flex: 1; min-height: 0; display: flex; padding-left: 1px; }
.sheet { flex: 1; min-width: 0; overflow: hidden; border-bottom: 1px solid #999; position: relative; }
.sheet::after { content: ""; position: absolute; right: 0; top: 21px; bottom: 0; width: 1px; background: #999; }
.grid { width: 1474px; table-layout: fixed; border-collapse: separate; border-spacing: 0; color: #000; font-size: 17px; line-height: 21px; font-weight: 300; }
.grid th { padding: 1px 0 0; font-weight: 300; background: #e6e6e6; text-align: center; }
.grid thead th { height: 22px; padding: 0; border-right: 1px solid #b0b0b0; border-bottom: 1px solid #999; }
.corner { display: block; margin: 3px 3px 0 auto; }
.grid tbody th { border-right: 1px solid #999; border-bottom: 1px solid #b8b8b8; }
.grid td { padding: 1px 3px 0; background: #fff; border-right: 1px solid #d4d4d4; border-bottom: 1px solid #d4d4d4; white-space: nowrap; overflow: hidden; }
.grid tr.r23 { height: 23px; }
.grid tr.r24 { height: 24px; }
.grid td.n { text-align: right; }
.grid td.c { text-align: center; }
.grid td.zh { font-size: 18px; }
.grid td.free { overflow: visible; }
.grid td.tight { padding: 1px 0 0 1px; }
.grid td.thick { border-bottom: 2px solid #000; padding-top: 0; }
.grid td.thin { border-bottom: 1px solid #000; }
.grid td.plain { border-right-color: #fff; }
.grid td.back { overflow: visible; padding: 1px 0 0; }
.back span { display: block; margin-left: -4px; overflow: hidden; }
.vscroll { width: 27px; flex: none; display: flex; flex-direction: column; padding: 1px 4px 0; }
.vscroll button, .hscroll button { display: flex; align-items: center; justify-content: center; background: #fff; border: 1px solid #ababab; flex: none; }
.vscroll button { width: 19px; height: 19px; }
.vthumb { height: 220px; width: 19px; border: 1px solid #ababab; background: #fff; }
.vtrack { flex: 1; width: 19px; background: #dadada; }

.chart { position: absolute; left: 780px; top: 35px; }
.ct { font: bold 28px Lato, sans-serif; }
.ax { font: 15px Lato, sans-serif; }
.at { font: bold 15px Lato, sans-serif; }
.lg { font: 350 16px "Noto Sans CJK SC", sans-serif; }
.cbtns { position: absolute; left: 1282px; top: 43px; display: flex; flex-direction: column; gap: 12px; }
.cbtns button { display: flex; align-items: center; justify-content: center; width: 35px; height: 35px; background: #fff; border: 1px solid #e1e1e1; }
.cbtns .on { background: #ababab; border-color: #3c9464; }

.panel { position: absolute; left: 1329px; top: 41px; z-index: 2; width: 160px; height: 249px; padding: 11px 12px; background: #fff; border: 1px solid #217346; color: #222; white-space: nowrap; }
.panel h3 { color: #217346; font-weight: bold; height: 24px; line-height: 24px; margin-bottom: 4px; }
.panel label { display: flex; align-items: center; height: 24px; padding-left: 4px; gap: 14px; }
.panel input { appearance: none; width: 14px; height: 14px; margin: 0; border: 1px solid #666; background: #fff; display: grid; place-items: center; }
.panel input:checked::after { content: ""; width: 9px; height: 5px; margin-bottom: 3px; border: solid #4178b5; border-width: 0 0 2px 2px; transform: rotate(-48deg); }
.notchL { position: absolute; left: -10px; top: 9px; }
.submenu { position: absolute; left: 1188px; top: 244px; z-index: 3; width: 146px; height: 180px; padding: 14px 12px; background: #fff; border: 1px solid #217346; box-shadow: 1px 2px 4px rgba(0,0,0,.2); color: #222; }
.submenu button { display: block; width: 120px; height: 30px; padding: 0 0 4px 7px; text-align: left; white-space: nowrap; }
.submenu .hot { background: #e1dfdd; }
.notchR { position: absolute; right: -10px; top: 9px; }

.sheets { height: 29px; flex: none; display: flex; align-items: flex-start; font-size: 17px; padding: 0 25px 0 28px; font-family: "Noto Sans", sans-serif; font-weight: 400; }
.nav { margin-top: 10px; }
.n2 { margin-left: 23px; }
.st { height: 25px; line-height: 22px; white-space: nowrap; }
.first { width: 82px; margin-left: 41px; border-left: 1px solid #999; }
.cur { height: 26px; width: 83px; background: #fff; color: #217346; border-bottom: 3px solid #217346; margin-top: -1px; position: relative; }
.last { width: 160px; border-right: 1px solid #999; }
.add { margin: 5px 0 0 33px; }
.sheets .dots { margin: 8px 15px 0 auto; }
.hscroll { display: flex; width: 536px; height: 19px; margin-top: 5px; }
.hscroll button { width: 19px; height: 19px; }
.hthumb { flex: 1; border: 1px solid #ababab; border-left: 0; background: #fff; }
.htrack { width: 28px; background: #dadada; }

.status { height: 28px; flex: none; display: flex; align-items: center; background: #f3f2f1; border-top: 1px solid #c6c6c6; padding: 0 25px 1px 11px; font-family: "Noto Sans", "Noto Sans CJK SC", sans-serif; }
.ready { margin-right: auto; }
.stat { margin-right: 20px; }
.views { display: flex; align-self: stretch; margin-left: 4px; margin-right: 7px; }
.views button { width: 50px; display: flex; align-items: center; justify-content: center; }
.views .on { background: #d2d0ce; }
.zoom { appearance: none; width: 126px; height: 16px; margin: 0 5px; background: linear-gradient(#999, #999) center / 100% 1px no-repeat; }
.zoom::-webkit-slider-thumb { appearance: none; width: 6px; height: 14px; background: #666; }
.pct { width: 40px; margin-left: 16px; }
```

FILE: sheet.js
```js
// Cell contents by row: [column, text, classes]
const rows = {
  1: [["A", "SUMMARY OUTPUT", "free plain"]],
  3: [["A", "回归统计", "c zh span"]],
  4: [["A", "Multiple R"], ["B", "0.570459", "n"]],
  5: [["A", "R Square"], ["B", "0.325423", "n"]],
  6: [["A", "Adjusted R Square"], ["B", "0.287947", "n"]],
  7: [["A", "标准误差", "zh"], ["B", "10.11138", "n"]],
  8: [["A", "观测值", "zh"], ["B", "20", "n"]],
  10: [["A", "方差分析", "zh"]],
  11: [["B", "df", "c"], ["C", "SS", "c"], ["D", "MS", "c"], ["E", "F", "c"], ["F", "gnificance F", "free tight plain"]],
  12: [["A", "回归分析", "zh"], ["B", "1", "n"], ["C", "887.7892", "n"], ["D", "887.7892", "n"], ["E", "8.683389", "n"], ["F", "0.008627", "n"]],
  13: [["A", "残差", "zh"], ["B", "18", "n"], ["C", "1840.319", "n"], ["D", "102.2399", "n"]],
  14: [["A", "总计", "zh"], ["B", "19", "n"], ["C", "2728.108", "n"]],
  16: [["A", "", "plain"], ["B", "<span>Coefficients</span>", "back"], ["C", "标准误差", "c zh"], ["D", "t Stat", "c"], ["E", "P-value", "c"], ["F", "Lower 95%", "tight"], ["G", "Upper 95%", "tight"], ["H", "下限 95.0%", "tight"], ["I", "上限 95.0%", "tight"]],
  17: [["A", "Intercept"], ["B", "-152.234", "n"], ["C", "95.86565", "n"], ["D", "-1.58799", "n"], ["E", "0.129699", "n"], ["F", "-353.64", "n"], ["G", "49.17247", "n"], ["H", "-353.64", "n"], ["I", "49.17247", "n"]],
  18: [["A", "X Variable 1"], ["B", "4.128037", "n"], ["C", "1.400874", "n"], ["D", "2.946759", "n"], ["E", "0.008627", "n"], ["F", "1.184911", "n"], ["G", "7.071164", "n"], ["H", "1.184911", "n"], ["I", "7.071164", "n"]]
};
// Bottom rules: row -> [last column, class]
const rules = { 2: ["B", "thick"], 3: ["B", "thin"], 8: ["B", "thick"], 10: ["F", "thick"], 11: ["F", "thin"], 14: ["F", "thick"], 15: ["I", "thick"], 16: ["I", "thin"], 18: ["I", "thick"] };
const tall = [2, 8, 10, 14, 15, 18];
const cols = [..."ABCDEFGHIJKLMNOPQR"];

let html = '<colgroup><col style="width:34px">' + '<col style="width:80px">'.repeat(cols.length) + "</colgroup><thead><tr>" +
  '<th><svg class="corner" width="15" height="15" viewBox="0 0 15 15"><path d="M15 0v15H0z" fill="#b4b4b4"/></svg></th>' +
  cols.map(c => `<th>${c}</th>`).join("") + "</tr></thead><tbody>";
for (let r = 1; r <= 20; r++) {
  const cells = Object.fromEntries((rows[r] || []).map(c => [c[0], c]));
  html += `<tr class="${tall.includes(r) ? "r24" : "r23"}"><th>${r}</th>`;
  for (let i = 0; i < cols.length; i++) {
    const c = cols[i], cell = cells[c];
    let cls = cell && cell[2] || "";
    if (rules[r] && c <= rules[r][0]) cls += " " + rules[r][1];
    const span = cls.includes("span") ? ' colspan="2"' : "";
    html += `<td${span} class="${cls.trim()}">${cell ? cell[1] : ""}</td>`;
    if (span) i++;
  }
  html += "</tr>";
}
document.getElementById("grid").innerHTML = html + "</tbody>";

// Scatter markers: observed values, then the fitted line
const observed = [[937, 411], [960, 404], [972, 408], [984, 407], [1002, 411], [1007, 398], [1011, 411], [1022, 398], [1026, 410], [1022, 407], [1030, 406], [1038, 398], [1039, 407], [1064, 394], [1079, 400], [1086, 401], [1124, 400], [1129, 401], [1139, 401]];
const fitted = [[937, 408], [960, 407], [972, 406], [984, 406], [1002, 405], [1006, 405], [1011, 404], [1022, 404], [1026, 404], [1038, 403], [1064, 402], [1079, 401], [1086, 401], [1124, 399], [1129, 399], [1139, 398]];
document.getElementById("points").innerHTML =
  observed.map(([x, y]) => `<path d="M${x} ${y - 5}l5 5-5 5-5-5z" fill="#4472c4"/>`).join("") +
  fitted.map(([x, y]) => `<rect x="${x - 5}" y="${y - 5}" width="10" height="10" fill="#ed7d31"/>`).join("");
```
